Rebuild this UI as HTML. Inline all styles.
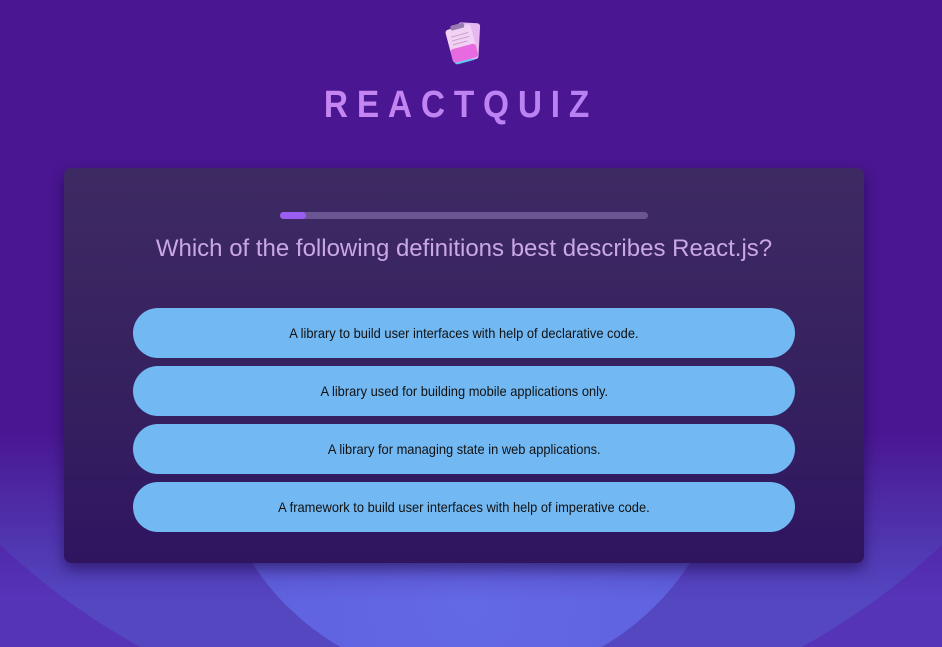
<!DOCTYPE html>
<html><head><meta charset="utf-8"><style>
html,body{margin:0;padding:0;width:942px;height:647px;overflow:hidden}
body{position:relative;font-family:"Liberation Sans",sans-serif;background:#4a1692;}
.bg{position:absolute;left:0;top:0;width:942px;height:647px;overflow:hidden;
-webkit-mask-image:linear-gradient(180deg,transparent 0,transparent 430px,#000 600px);mask-image:linear-gradient(180deg,transparent 0,transparent 430px,#000 600px);background:#5634b8}
.c1{position:absolute;left:-215px;top:-640px;width:1372px;height:1372px;border-radius:50%;background:#5447c0}
.c2{position:absolute;left:210px;top:160px;width:522px;height:522px;border-radius:50%;background:radial-gradient(circle at 50% 85%,#6368e4 0%,#5d60dc 60%,#5858d2 100%)}
.logo{position:absolute;left:438px;top:18px}
.title{position:absolute;left:-10px;width:942px;top:84px;text-align:center;font-size:38px;font-weight:bold;letter-spacing:10px;transform:scaleX(.88);
background:linear-gradient(90deg,#d78cf0,#a77af5);-webkit-background-clip:text;background-clip:text;color:transparent;}
.card{position:absolute;left:64px;top:168px;width:800px;height:395px;border-radius:7px;background:linear-gradient(180deg,#3e2a63 0%,#35205f 60%,#2f1460 100%);box-shadow:0 6px 14px rgba(20,0,50,.5);}
.track{position:absolute;left:216px;top:44px;width:368px;height:7px;border-radius:4px;background:#6b5593}
.fill{position:absolute;left:0;top:0;width:26px;height:7px;border-radius:4px;background:#9a5ef2}
.q{position:absolute;left:0;width:800px;top:67px;text-align:center;font-size:24px;color:#c9a7e4}
.b{position:absolute;left:69px;width:662px;height:50px;border-radius:25px;background:#72b9f3;color:#111;font-size:14px;line-height:50px;text-align:center}
.b span{display:inline-block;transform:scaleX(.92)}
</style></head><body>
<div class="bg"><div class="c1"></div><div class="c2"></div></div>
<svg class="logo" width="52" height="52" viewBox="0 0 52 52">
<g transform="rotate(-15 26 26)">
<rect x="12" y="8" width="22" height="36" rx="3" fill="#5fc8f0"/>
<rect x="20" y="6" width="22" height="36" rx="3" fill="#e6b8f0" transform="rotate(18 31 24)"/>
<rect x="11" y="8" width="26" height="34" rx="3" fill="#f2d2f4"/>
<rect x="11" y="28" width="26" height="14" rx="3" fill="#e86ae0"/>
<rect x="17" y="5" width="14" height="5" rx="2" fill="#9a7ab0"/>
<line x1="15" y1="16" x2="33" y2="16" stroke="#c8a0d0" stroke-width="1"/>
<line x1="15" y1="20" x2="33" y2="20" stroke="#c8a0d0" stroke-width="1"/>
<line x1="15" y1="24" x2="30" y2="24" stroke="#c8a0d0" stroke-width="1"/>
</g></svg>
<div class="title">REACTQUIZ</div>
<div class="card">
<div class="track"><div class="fill"></div></div>
<div class="q">Which of the following definitions best describes React.js?</div>
<div class="b" style="top:140px"><span>A library to build user interfaces with help of declarative code.</span></div>
<div class="b" style="top:198px"><span>A library used for building mobile applications only.</span></div>
<div class="b" style="top:256px"><span>A library for managing state in web applications.</span></div>
<div class="b" style="top:314px"><span>A framework to build user interfaces with help of imperative code.</span></div>
</div>
</body></html>
